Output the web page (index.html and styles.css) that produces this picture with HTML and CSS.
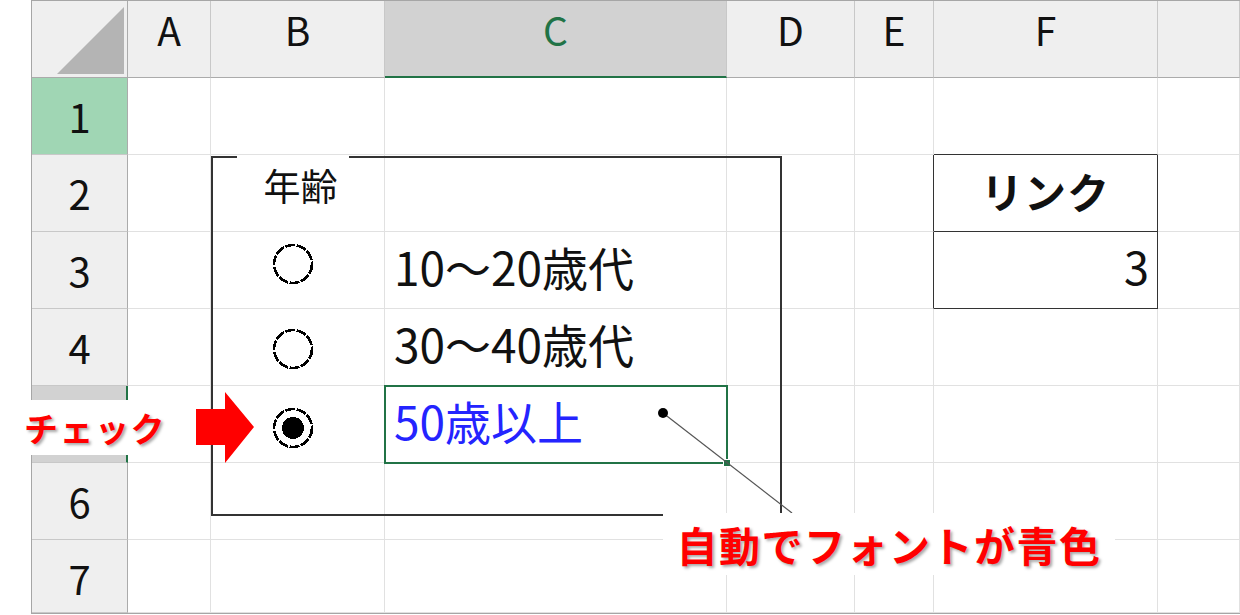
FILE: index.html
```html
<!DOCTYPE html>
<html lang="ja">
<head>
  <meta charset="UTF-8">
  <title>オプションボタン - 年齢</title>
  <link rel="stylesheet" href="styles.css">
</head>
<body>

  <div class="stage">
    <div class="sheet">
      <!-- column headers -->
      <div class="cell corner">
        <svg width="96" height="77" viewBox="0 0 96 77"><polygon points="25,73 92,6 92,73" fill="#b4b4b4"/></svg>
      </div>
      <div class="cell ch">A</div>
      <div class="cell ch">B</div>
      <div class="cell ch ch-sel">C</div>
      <div class="cell ch">D</div>
      <div class="cell ch">E</div>
      <div class="cell ch">F</div>
      <div class="cell ch"></div>

      <!-- row 1 -->
      <div class="cell rh rh-active">1</div>
      <div class="cell"></div>
      <div class="cell"></div>
      <div class="cell"></div>
      <div class="cell"></div>
      <div class="cell"></div>
      <div class="cell tb-above"></div>
      <div class="cell"></div>

      <!-- row 2 -->
      <div class="cell rh">2</div>
      <div class="cell"></div>
      <div class="cell group-title">年齢</div>
      <div class="cell"></div>
      <div class="cell"></div>
      <div class="cell tb-left"></div>
      <div class="cell tb link-head">リンク</div>
      <div class="cell"></div>

      <!-- row 3 -->
      <div class="cell rh">3</div>
      <div class="cell"></div>
      <div class="cell radio-cell r3">
        <svg class="radio" width="44" height="44" viewBox="0 0 44 44"><circle cx="22" cy="22" r="19" fill="none" stroke="#000" stroke-width="2.6" stroke-dasharray="10 1.6"/></svg>
      </div>
      <div class="cell val">10～20歳代</div>
      <div class="cell"></div>
      <div class="cell tb-left"></div>
      <div class="cell tb link-val">3</div>
      <div class="cell"></div>

      <!-- row 4 -->
      <div class="cell rh">4</div>
      <div class="cell"></div>
      <div class="cell radio-cell r4">
        <svg class="radio" width="44" height="44" viewBox="0 0 44 44"><circle cx="22" cy="22" r="19" fill="none" stroke="#000" stroke-width="2.6" stroke-dasharray="10 1.6"/></svg>
      </div>
      <div class="cell val">30～40歳代</div>
      <div class="cell"></div>
      <div class="cell"></div>
      <div class="cell"></div>
      <div class="cell"></div>

      <!-- row 5 (number hidden under the note) -->
      <div class="cell rh rh-sel"></div>
      <div class="cell"></div>
      <div class="cell radio-cell r5">
        <svg class="radio" width="44" height="44" viewBox="0 0 44 44"><circle cx="22" cy="22" r="19" fill="none" stroke="#000" stroke-width="2.6" stroke-dasharray="10 1.6"/><circle cx="22" cy="22" r="11" fill="#000"/></svg>
      </div>
      <div class="cell val val-blue">50歳以上</div>
      <div class="cell"></div>
      <div class="cell"></div>
      <div class="cell"></div>
      <div class="cell"></div>

      <!-- row 6 -->
      <div class="cell rh">6</div>
      <div class="cell"></div>
      <div class="cell"></div>
      <div class="cell"></div>
      <div class="cell"></div>
      <div class="cell"></div>
      <div class="cell"></div>
      <div class="cell"></div>

      <!-- row 7 -->
      <div class="cell rh">7</div>
      <div class="cell"></div>
      <div class="cell"></div>
      <div class="cell"></div>
      <div class="cell"></div>
      <div class="cell"></div>
      <div class="cell"></div>
      <div class="cell"></div>
    </div>

    <!-- group box frame -->
    <div class="frame">
      <div class="legend-gap"></div>
    </div>

    <!-- active cell C5 -->
    <div class="selection">
      <div class="handle"></div>
    </div>

    <svg class="marks" width="1240" height="615" viewBox="0 0 1240 615">
      <line x1="663" y1="413" x2="792" y2="513" stroke="#555" stroke-width="1.2"/>
      <circle cx="663" cy="413" r="5" fill="#000"/>
      <polygon points="196,409 225,409 225,392 254,427 225,463 225,445 196,445" fill="#ff0000"/>
    </svg>

    <div class="note note-check">チェック</div>
    <div class="note note-blue">自動でフォントが青色</div>
  </div>

</body>
</html>
```

FILE: styles.css
```css
body {
  margin: 0;
  background: #fff;
  font-family: "Noto Sans CJK JP", "Noto Sans", sans-serif;
  color: #111;
}
.stage {
  position: relative;
  width: 1240px;
  height: 615px;
  overflow: hidden;
}
.sheet {
  margin-left: 31px;
  display: grid;
  grid-template-columns: 96px 83px 174px 342px 128px 79px 224px 82px;
  grid-template-rows: repeat(7, 77px) 73px;
  border: 1px solid #a6a6a6;
  width: 1209px;
  box-sizing: border-box;
}
.cell {
  box-sizing: border-box;
  border-right: 1px solid #e1e1e1;
  border-bottom: 1px solid #e1e1e1;
  white-space: nowrap;
}
.corner {
  background: #efefef;
  border-right-color: #ababab;
  border-bottom-color: #ababab;
}
.corner svg {
  display: block;
}
.ch {
  background: #efefef;
  border-right-color: #c8c8c8;
  border-bottom-color: #ababab;
  text-align: center;
  font-size: 39px;
  line-height: 56px;
}
.ch-sel {
  background: #d2d2d2;
  color: #217346;
  border-bottom: 2px solid #217346;
}
.rh {
  background: #efefef;
  border-right-color: #ababab;
  border-bottom-color: #c8c8c8;
  text-align: center;
  font-size: 40px;
  line-height: 77px;
}
.rh-active {
  background: #a0d6b4;
}
.rh-sel {
  background: #d2d2d2;
  border-right: 2px solid #217346;
}

/* F2:F3 link table */
.tb-above {
  border-bottom-color: #333;
}
.tb-left {
  border-right-color: #333;
}
.tb {
  border-right-color: #333;
  border-bottom-color: #333;
}
.link-head {
  text-align: center;
  font-weight: bold;
  font-size: 42px;
  line-height: 72px;
  letter-spacing: 1px;
}
.link-val {
  text-align: right;
  padding-right: 8px;
  font-size: 45px;
  line-height: 68px;
}

/* group box content */
.group-title {
  text-align: center;
  padding-left: 6px;
  font-size: 37px;
  line-height: 60px;
}
.radio-cell {
  display: flex;
  justify-content: center;
  align-items: center;
  padding-right: 10px;
}
.radio {
  display: block;
  shape-rendering: crispEdges;
}
.r3 {
  padding-bottom: 12px;
}
.r4 {
  padding-top: 3px;
}
.r5 {
  padding-top: 8px;
}
.val {
  padding-left: 9px;
  font-size: 46px;
  line-height: 68px;
}
.val-blue {
  color: #2424ff;
}

.frame {
  position: absolute;
  left: 211px;
  top: 156px;
  width: 571px;
  height: 360px;
  border: 2px solid #333;
  box-sizing: border-box;
}
.legend-gap {
  position: absolute;
  left: 24px;
  top: -2px;
  width: 112px;
  height: 2px;
  background: #fff;
}
.selection {
  position: absolute;
  left: 384px;
  top: 385px;
  width: 344px;
  height: 79px;
  border: 2px solid #217346;
  box-sizing: border-box;
}
.handle {
  position: absolute;
  right: -5px;
  bottom: -5px;
  width: 6px;
  height: 6px;
  background: #217346;
  border: 1px solid #fff;
}
.marks {
  position: absolute;
  left: 0;
  top: 0;
}
.note {
  position: absolute;
  background: #fff;
  color: #ff0000;
  font-weight: bold;
  text-shadow: 2px 2px 3px rgba(0,0,0,0.35);
}
.note-check {
  left: 0;
  top: 400px;
  width: 196px;
  height: 55px;
  padding-left: 24px;
  box-sizing: border-box;
  font-size: 34px;
  line-height: 55px;
  letter-spacing: 1.5px;
}
.note-blue {
  left: 663px;
  top: 513px;
  width: 452px;
  height: 62px;
  text-align: center;
  font-size: 41px;
  line-height: 62px;
  letter-spacing: 1.5px;
}
```
